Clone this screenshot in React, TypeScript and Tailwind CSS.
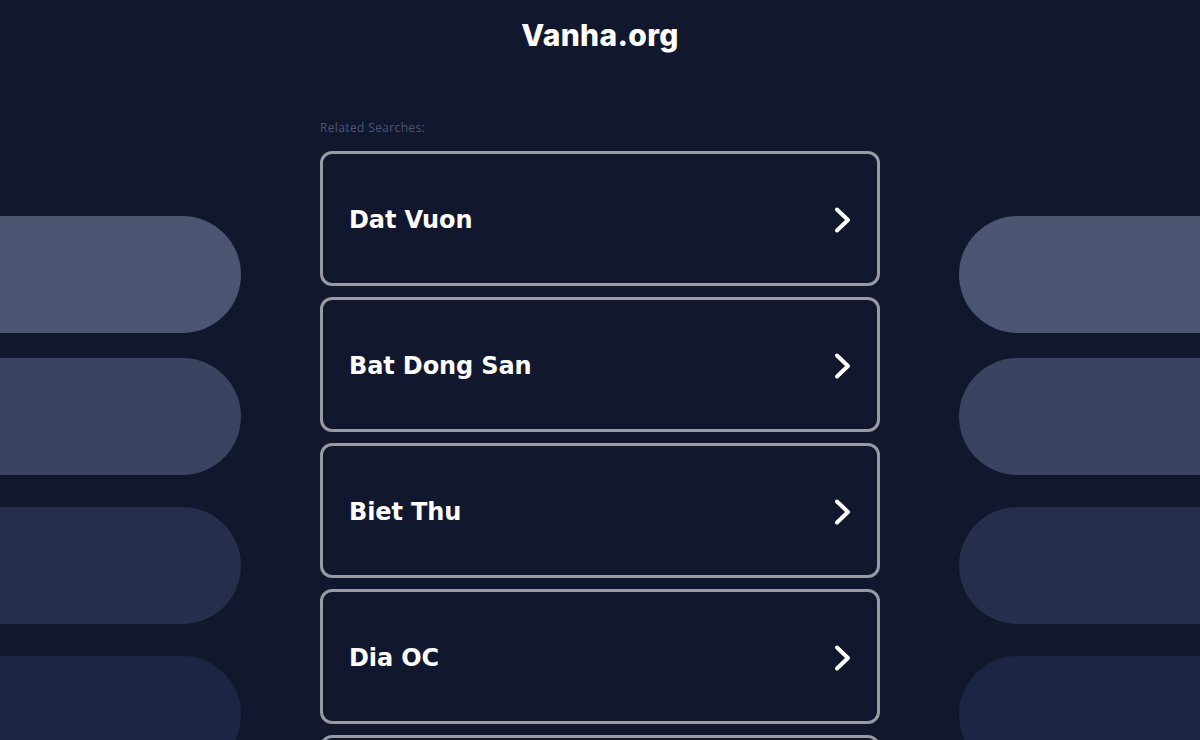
const searches = ['Dat Vuon', 'Bat Dong San', 'Biet Thu', 'Dia OC', ''];

const pills = [
  { cls: 'bg-[#4b5571] mt-[146px]' },
  { cls: 'bg-[#3a435f] mt-[25px]' },
  { cls: 'bg-[#262e4b] mt-[32px]' },
  { cls: 'bg-[#1d2545] mt-[32px]' },
];

function Chevron() {
  return (
    <svg width="20" height="28" viewBox="0 0 20 28" fill="none" className="shrink-0">
      <polyline
        points="4,3.5 15,14 4,24.5"
        stroke="white"
        strokeWidth="4"
        strokeLinecap="round"
        strokeLinejoin="round"
      />
    </svg>
  );
}

export default function App() {
  return (
    <div className="h-[740px] w-full overflow-hidden bg-[#11172c] font-['DejaVu_Sans',sans-serif]">
      <header className="flex h-[70px] items-center justify-center">
        <h1 className="font-['Inter',sans-serif] text-[30px] font-extrabold tracking-[0.01em] text-white">
          Vanha.org
        </h1>
      </header>

      <div className="flex justify-between">
        {/* left decoration */}
        <div className="flex w-[241px] flex-col">
          {pills.map((p, i) => (
            <div key={i} className={`h-[117px] w-full shrink-0 rounded-r-full ${p.cls}`} />
          ))}
        </div>

        <main className="flex w-[560px] flex-col">
          <p className="mt-[51px] h-[30px] font-['Open_Sans',sans-serif] text-[12px] leading-[14px] tracking-[0.03em] text-[#4e5578]">
            Related Searches:
          </p>
          <div className="flex flex-col gap-[11px]">
            {searches.map((s, i) => (
              <a
                key={i}
                href="#"
                className="flex h-[135px] shrink-0 items-center justify-between rounded-[12px] border-[3px] border-[#9a9ba1] pl-[26px] pr-[24px] pt-[3px]"
              >
                <span className="text-[24px] font-bold tracking-[-0.005em] text-white">{s}</span>
                <Chevron />
              </a>
            ))}
          </div>
        </main>

        {/* right decoration */}
        <div className="flex w-[241px] flex-col">
          {pills.map((p, i) => (
            <div key={i} className={`h-[117px] w-full shrink-0 rounded-l-full ${p.cls}`} />
          ))}
        </div>
      </div>
    </div>
  );
}
